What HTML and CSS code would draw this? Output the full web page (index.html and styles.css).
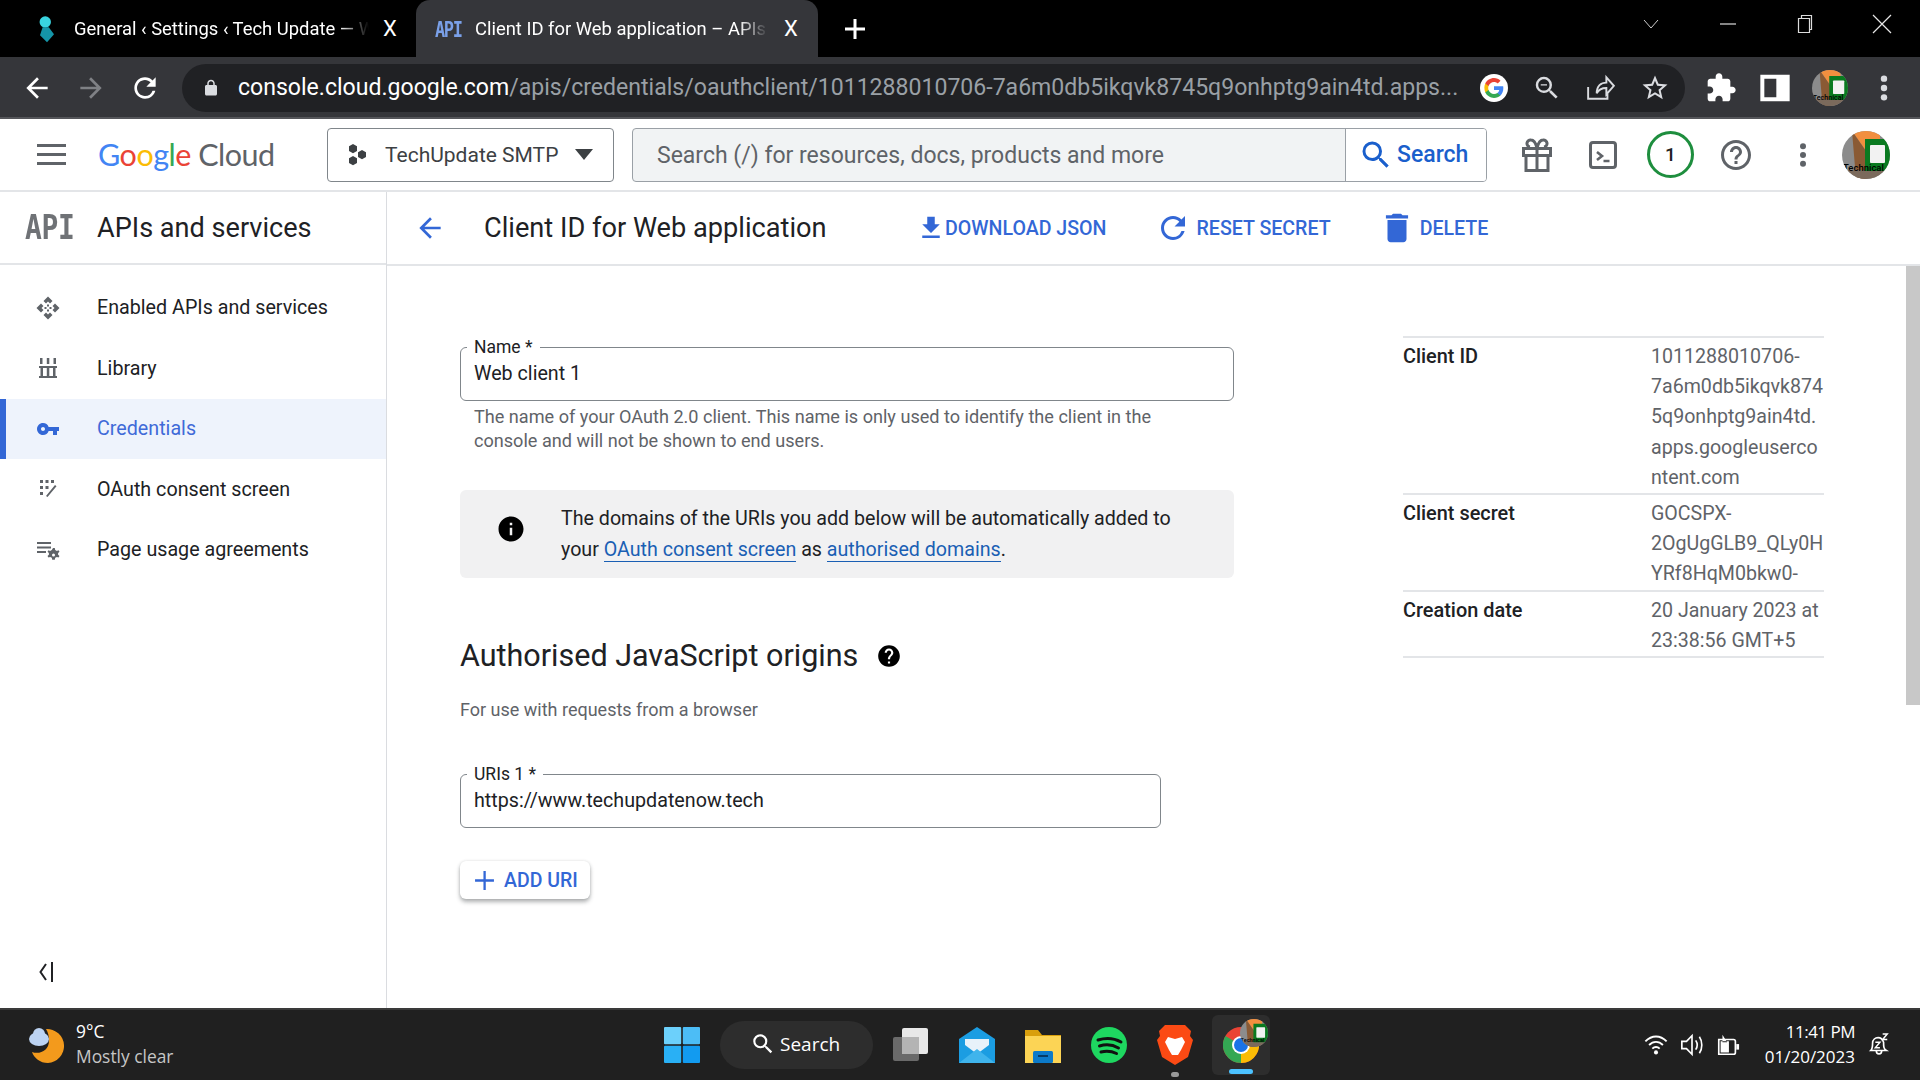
FILE: index.html
```html
<!DOCTYPE html>
<html lang="en">
<head>
<meta charset="utf-8">
<title>Client ID for Web application</title>
<link rel="stylesheet" href="styles.css">
</head>
<body>
<svg class="sprite" aria-hidden="true">
  <symbol id="i-back" viewBox="0 0 24 24"><path d="M20 11H7.83l5.59-5.59L12 4l-8 8 8 8 1.41-1.41L7.83 13H20v-2z"/></symbol>
  <symbol id="i-reload" viewBox="0 0 24 24"><path d="M17.65 6.35A7.958 7.958 0 0 0 12 4c-4.42 0-7.99 3.58-7.99 8s3.57 8 7.99 8c3.73 0 6.84-2.55 7.73-6h-2.08A5.99 5.99 0 0 1 12 18c-3.31 0-6-2.69-6-6s2.69-6 6-6c1.66 0 3.14.69 4.22 1.78L13 11h7V4l-2.35 2.35z"/></symbol>
  <symbol id="i-lock" viewBox="0 0 24 24"><path d="M18 8h-1V6c0-2.76-2.24-5-5-5S7 3.24 7 6v2H6c-1.1 0-2 .9-2 2v10c0 1.1.9 2 2 2h12c1.1 0 2-.9 2-2V10c0-1.1-.9-2-2-2zM9 6c0-1.66 1.34-3 3-3s3 1.34 3 3v2H9V6z"/></symbol>
  <symbol id="i-zoomout" viewBox="0 0 24 24"><path d="M15.5 14h-.79l-.28-.27A6.471 6.471 0 0 0 16 9.5 6.5 6.5 0 1 0 9.5 16c1.61 0 3.09-.59 4.23-1.57l.27.28v.79l5 4.99L20.49 19l-4.99-5zm-6 0C7.01 14 5 11.99 5 9.5S7.01 5 9.5 5 14 7.01 14 9.5 11.99 14 9.5 14zM7 9h5v1H7z"/></symbol>
  <symbol id="i-search" viewBox="0 0 24 24"><path d="M15.5 14h-.79l-.28-.27A6.471 6.471 0 0 0 16 9.5 6.5 6.5 0 1 0 9.5 16c1.61 0 3.09-.59 4.23-1.57l.27.28v.79l5 4.99L20.49 19l-4.99-5zm-6 0C7.01 14 5 11.99 5 9.5S7.01 5 9.5 5 14 7.01 14 9.5 11.99 14 9.5 14z"/></symbol>
  <symbol id="i-star" viewBox="0 0 24 24"><path d="M22 9.24l-7.19-.62L12 2 9.19 8.63 2 9.24l5.46 4.73L5.82 21 12 17.27 18.18 21l-1.63-7.03L22 9.24zM12 15.4l-3.76 2.27 1-4.28-3.32-2.88 4.38-.38L12 6.1l1.71 4.04 4.38.38-3.32 2.88 1 4.28L12 15.4z"/></symbol>
  <symbol id="i-puzzle" viewBox="0 0 24 24"><path d="M20.5 11H19V7c0-1.1-.9-2-2-2h-4V3.5C13 2.12 11.88 1 10.5 1S8 2.12 8 3.5V5H4c-1.1 0-1.99.9-1.99 2v3.8H3.5c1.49 0 2.7 1.21 2.7 2.7s-1.21 2.7-2.7 2.7H2V20c0 1.1.9 2 2 2h3.8v-1.5c0-1.49 1.21-2.7 2.7-2.7 1.49 0 2.7 1.21 2.7 2.7V22H17c1.1 0 2-.9 2-2v-4h1.5c1.38 0 2.5-1.12 2.5-2.5S21.88 11 20.5 11z"/></symbol>
  <symbol id="i-download" viewBox="0 0 24 24"><path d="M19 9h-4V3H9v6H5l7 7 7-7zM5 18v2h14v-2H5z"/></symbol>
  <symbol id="i-trash" viewBox="0 0 24 24"><path d="M6 19c0 1.1.9 2 2 2h8c1.1 0 2-.9 2-2V7H6v12zM19 4h-3.5l-1-1h-5l-1 1H5v2h14V4z"/></symbol>
  <symbol id="i-info" viewBox="0 0 24 24"><path d="M12 2C6.48 2 2 6.48 2 12s4.48 10 10 10 10-4.48 10-10S17.52 2 12 2zm1 15h-2v-6h2v6zm0-8h-2V7h2v2z"/></symbol>
  <symbol id="i-helpf" viewBox="0 0 24 24"><path d="M12 2C6.48 2 2 6.48 2 12s4.48 10 10 10 10-4.48 10-10S17.52 2 12 2zm1 17h-2v-2h2v2zm2.07-7.75l-.9.92C13.45 12.9 13 13.5 13 15h-2v-.5c0-1.1.45-2.1 1.17-2.83l1.24-1.26c.37-.36.59-.86.59-1.41 0-1.1-.9-2-2-2s-2 .9-2 2H8c0-2.21 1.79-4 4-4s4 1.79 4 4c0 .88-.36 1.68-.93 2.25z"/></symbol>
  <symbol id="i-help" viewBox="0 0 24 24"><path d="M11 18h2v-2h-2v2zm1-16C6.48 2 2 6.48 2 12s4.48 10 10 10 10-4.48 10-10S17.52 2 12 2zm0 18c-4.41 0-8-3.59-8-8s3.59-8 8-8 8 3.59 8 8-3.59 8-8 8zm0-14c-2.21 0-4 1.79-4 4h2c0-1.1.9-2 2-2s2 .9 2 2c0 2-3 1.75-3 5h2c0-2.25 3-2.5 3-5 0-2.21-1.79-4-4-4z"/></symbol>
  <symbol id="i-key" viewBox="0 0 24 24"><path d="M12.65 10A5.99 5.99 0 0 0 7 6c-3.31 0-6 2.69-6 6s2.69 6 6 6a5.99 5.99 0 0 0 5.65-4H17v4h4v-4h2v-4H12.65zM7 14c-1.1 0-2-.9-2-2s.9-2 2-2 2 .9 2 2-.9 2-2 2z"/></symbol>
  <symbol id="i-dots" viewBox="0 0 24 24"><circle cx="12" cy="5" r="2.4"/><circle cx="12" cy="12" r="2.4"/><circle cx="12" cy="19" r="2.4"/></symbol>
  <symbol id="i-avatar" viewBox="0 0 48 48"><g clip-path="url(#av)"><rect width="48" height="48" fill="#8c8c8c"/><path d="M10 0h28v20H24z" fill="#f28f3f"/><path d="M10 0l14 20v28H14z" fill="#8a5a34"/><rect x="0" y="39" width="48" height="9" fill="#7b6a5c"/><path d="M23 8h19a6 6 0 0 1 6 6v20a6 6 0 0 1-6 6H23z" fill="#0a7a20"/><rect x="28" y="14" width="15" height="18" rx="1" fill="#f2f2f2"/><text x="1" y="40" class="avatar-text">Technical</text></g></symbol>
  <clipPath id="av"><circle cx="24" cy="24" r="24"/></clipPath>
  <symbol id="i-g" viewBox="0 0 48 48"><circle cx="24" cy="24" r="24" fill="#fff"/><path fill="#4285f4" d="M40 24.6c0-1.2-.1-2.3-.3-3.4H24v6.4h9c-.4 2.1-1.6 3.9-3.3 5.1v4.2h5.4C38.2 33.9 40 29.700 40 24.600z"/><path fill="#34a853" d="M24 41c4.500 0 8.300-1.500 11.100-4.100l-5.400-4.200c-1.500 1-3.400 1.600-5.700 1.600-4.400 0-8.100-3-9.400-6.900H9v4.300C11.800 37 17.500 41 24 41z"/><path fill="#fbbc05" d="M14.600 27.400c-.7-2-.7-4.800 0-6.800v-4.300H9c-2 3.900-2 9.500 0 15.400z"/><path fill="#ea4335" d="M24 13.700c2.500 0 4.700.9 6.400 2.500l4.800-4.800C32.300 8.700 28.500 7 24 7 17.500 7 11.800 11 9 16.300l5.600 4.300c1.300-3.900 5-6.900 9.400-6.900z"/></symbol>
</svg>

<header class="tabstrip">
  <div class="tab">
    <svg class="tab-fav" viewBox="0 0 20 32"><circle cx="8" cy="8" r="6.500" fill="#39d3df"/><path d="M5 14h7l6 8-8 9-8-8z" fill="#1595a8"/></svg>
    <span class="tab-title fade">General ‹ Settings ‹ Tech Update — WordPress</span>
    <span class="tab-x">X</span>
  </div>
  <div class="tab tab-on">
    <span class="tab-api">API</span>
    <span class="tab-title fade">Client ID for Web application – APIs and services</span>
    <span class="tab-x">X</span>
  </div>
  <span class="tab-plus">
    <svg viewBox="0 0 20 20"><path d="M8.500 0h3v8.500H20v3h-8.500V20h-3v-8.500H0v-3h8.500z" fill="#fff"/></svg>
  </span>
  <div class="winctl">
    <svg viewBox="0 0 20 20"><path d="M3 6l7 8 7-8" fill="none" stroke="#cfcfcf" stroke-width="1"/></svg>
    <svg viewBox="0 0 20 20"><path d="M2 10h16" stroke="#dcdcdc" stroke-width="1.200"/></svg>
    <svg viewBox="0 0 20 20"><path d="M3.500 4.500h11v14h-11zM6.500 4.500V1.500h10v14h-2" fill="none" stroke="#dcdcdc" stroke-width="1.200"/></svg>
    <svg viewBox="0 0 20 20"><path d="M1 1l18 18M19 1L1 19" fill="none" stroke="#e6e6e6" stroke-width="1.200"/></svg>
  </div>
</header>

<nav class="toolbar">
  <svg class="tb-ico tb-white"><use href="#i-back"/></svg>
  <svg class="tb-ico tb-dim"><use href="#i-back" transform="matrix(-1 0 0 1 32 0)"/></svg>
  <svg class="tb-ico tb-white"><use href="#i-reload"/></svg>
  <div class="omnibox">
    <svg class="omni-lock"><use href="#i-lock"/></svg>
    <span class="url"><b>console.cloud.google.com</b>/apis/credentials/oauthclient/1011288010706-7a6m0db5ikqvk8745q9onhptg9ain4td.apps...</span>
    <svg class="omni-g"><use href="#i-g"/></svg>
    <svg class="omni-ico"><use href="#i-zoomout"/></svg>
    <svg class="omni-ico" viewBox="0 0 28 28"><path d="M4 13v11h18v-6M12 19c0-7 4-10 9-10V4l7 8-7 8v-6c-4 0-7 1-9 5z" transform="translate(-2 0)" fill="none" stroke="#dadce0" stroke-width="1.800"/></svg>
    <svg class="omni-ico"><use href="#i-star"/></svg>
  </div>
  <svg class="tb-ico tb-white ext"><use href="#i-puzzle"/></svg>
  <svg class="tb-ico" viewBox="0 0 24 24"><path fill-rule="evenodd" d="M1 2h22v20H1zM4 5v14h9V5z" fill="#fff"/></svg>
  <svg class="tb-avatar"><use href="#i-avatar"/></svg>
  <svg class="tb-ico tb-grey"><use href="#i-dots"/></svg>
</nav>

<div class="gc-header">
  <div class="burger"><i></i><i></i><i></i></div>
  <div class="logo"><span class="c-b">G</span><span class="c-r">o</span><span class="c-y">o</span><span class="c-b">g</span><span class="c-g">l</span><span class="c-r">e</span> <span class="logo-cloud">Cloud</span></div>
  <button class="project">
    <svg class="hex" viewBox="0 0 20 22"><path d="M5 0l4 2.300v4.600L5 9.200 1 6.900V2.300zM14 6l4 2.300v4.600L14 15.200l-4-2.300V8.300zM5 12l4 2.300v4.600L5 21.200 1 18.900v-4.600z" fill="#3c4043"/></svg>
    <span>TechUpdate SMTP</span>
    <i class="caret"></i>
  </button>
  <div class="searchbox">
    <span class="search-ph">Search (/) for resources, docs, products and more</span>
    <span class="search-btn"><svg><use href="#i-search"/></svg>Search</span>
  </div>
  <div class="gc-tools">
    <svg class="gc-ico" viewBox="0 0 32 34"><path d="M2.500 10.500h27v7h-27zM5 17.500h22v15H5zM16 10.500v22M16 10c-1-4-3-8-6-8a3.500 3.500 0 0 0-1 7M16 10c1-4 3-8 6-8a3.500 3.500 0 0 1 1 7" fill="none" stroke="#5f6368" stroke-width="3"/></svg>
    <svg class="gc-ico" viewBox="0 0 32 34"><rect x="3.500" y="4.500" width="25" height="25" rx="2.500" fill="none" stroke="#5f6368" stroke-width="3"/><path d="M10 14l5 4-5 4M16.500 23h6" fill="none" stroke="#5f6368" stroke-width="2.600"/></svg>
    <span class="badge">1</span>
    <svg class="gc-ico help"><use href="#i-help"/></svg>
    <svg class="gc-ico dots"><use href="#i-dots"/></svg>
    <svg class="gc-avatar"><use href="#i-avatar"/></svg>
  </div>
</div>

<div class="workspace">
  <aside class="sidebar">
    <div class="side-head"><span class="api-mark">API</span><span class="side-title">APIs and services</span></div>
    <ul class="side-nav">
      <li class="nav-item">
        <svg class="nav-ico" viewBox="0 0 24 24"><path d="M12 .5l4.500 4.500-2.500 2.500-2-2-2 2L7.500 5zM12 23.500L7.500 19l2.500-2.500 2 2 2-2 2.500 2.500zM.5 12L5 7.500 7.500 10l-2 2 2 2L5 16.500zM23.500 12L19 16.500 16.500 14l2-2-2-2L19 7.500z"/><rect x="11" y="8.500" width="2" height="2"/><rect x="11" y="13.500" width="2" height="2"/><rect x="8.500" y="11" width="2" height="2"/><rect x="13.500" y="11" width="2" height="2"/></svg>
        Enabled APIs and services
      </li>
      <li class="nav-item">
        <svg class="nav-ico" viewBox="0 0 24 24"><path d="M4 2h2.500v6H4zM10.800 2h2.500v6h-2.500zM17.500 2H20v6h-2.500zM3 10h18v2H3zM4.500 12H7v8H4.500zM10.800 12h2.500v8h-2.500zM17 12h2.500v8H17zM3 20h18v2H3z"/></svg>
        Library
      </li>
      <li class="nav-item nav-on">
        <svg class="nav-ico"><use href="#i-key"/></svg>
        Credentials
      </li>
      <li class="nav-item">
        <svg class="nav-ico" viewBox="0 0 24 24"><path d="M4 3h3v3H4zM9.500 3h3v3h-3zM15 3h3v3h-3zM4 9h3v3H4zM9.500 9h3v3h-3zM4 15h3v3H4zM10 19l9-11 1.500 1.300L11.500 20z"/></svg>
        OAuth consent screen
      </li>
      <li class="nav-item">
        <svg class="nav-ico" viewBox="0 0 24 24"><path d="M1 4h14v2H1zM1 8.500h14v2H1zM1 13h9v2H1zM17 10l1.800 0 .4 2 1.700.9 1.600-.7 1 1.600-1.400 1.200v1.800l1.400 1.200-1 1.600-1.600-.7-1.700.9-.4 2H16.200l-.4-2-1.700-.9-1.600.7-1-1.600 1.400-1.200v-1.800l-1.400-1.200 1-1.600 1.600.7 1.700-.9zM17.500 15.500a1.500 1.500 0 1 0 0 3 1.500 1.500 0 0 0 0-3z" fill-rule="evenodd"/></svg>
        Page usage agreements
      </li>
    </ul>
    <div class="collapse"><svg viewBox="0 0 16 22"><path d="M7 3L1.500 11 7 19M13 1v20" fill="none" stroke="#202124" stroke-width="2"/></svg></div>
  </aside>

  <main class="content">
    <div class="page-head">
      <svg class="back"><use href="#i-back"/></svg>
      <h1 class="page-title">Client ID for Web application</h1>
      <a class="act act-dl"><svg><use href="#i-download"/></svg>DOWNLOAD JSON</a>
      <a class="act act-reset"><svg><use href="#i-reload"/></svg>RESET SECRET</a>
      <a class="act act-del"><svg><use href="#i-trash"/></svg>DELETE</a>
    </div>
    <div class="scroll-area">
      <div class="form-col">
        <div class="field field-name">
          <span class="field-label">Name *</span>
          <span class="field-value">Web client 1</span>
        </div>
        <p class="helper">The name of your OAuth 2.0 client. This name is only used to identify the client in the console and will not be shown to end users.</p>
        <div class="notice">
          <svg class="notice-ico"><use href="#i-info"/></svg>
          <p>The domains of the URIs you add below will be automatically added to your <a>OAuth consent screen</a> as <a>authorised domains</a>.</p>
        </div>
        <h2 class="section-title">Authorised JavaScript origins <svg><use href="#i-helpf"/></svg></h2>
        <p class="section-sub">For use with requests from a browser</p>
        <div class="field field-uri">
          <span class="field-label">URIs 1 *</span>
          <span class="field-value">https://www.techupdatenow.tech</span>
        </div>
        <button class="add-uri"><svg viewBox="0 0 20 20"><path d="M9 1h2.200v7.900H19v2.200h-7.800V19H9v-7.900H1V8.900h8z"/></svg>ADD URI</button>
      </div>
      <dl class="meta">
        <div class="meta-row"><dt>Client ID</dt><dd>1011288010706-<br>7a6m0db5ikqvk874<br>5q9onhptg9ain4td.<br>apps.googleuserco<br>ntent.com</dd></div>
        <div class="meta-row"><dt>Client secret</dt><dd>GOCSPX-<br>2OgUgGLB9_QLy0H<br>YRf8HqM0bkw0-</dd></div>
        <div class="meta-row"><dt>Creation date</dt><dd>20 January 2023 at<br>23:38:56 GMT+5</dd></div>
      </dl>
      <div class="scrollbar"><i></i></div>
    </div>
  </main>
</div>

<footer class="taskbar">
  <div class="weather">
    <svg viewBox="0 0 36 40"><path d="M18 4a17 17 0 0 1 2 34C12 38 6 33 4 27c8 3 17-2 17-11 0-5-1-9-3-12z" fill="#f39a1c"/><ellipse cx="11" cy="14" rx="10" ry="7" fill="#bcd3f2"/><circle cx="11" cy="9" r="6" fill="#bcd3f2"/></svg>
    <div class="weather-text"><span>9°C</span><span class="dim">Mostly clear</span></div>
  </div>
  <div class="task-center">
    <svg class="winlogo" viewBox="0 0 36 36"><rect width="17.200" height="17.200" rx="1" fill="#6cd0fb"/><rect x="18.800" width="17.200" height="17.200" rx="1" fill="#4cbdf6"/><rect y="18.800" width="17.200" height="17.200" rx="1" fill="#29b0f5"/><rect x="18.800" y="18.800" width="17.200" height="17.200" rx="1" fill="#129bf0"/></svg>
    <div class="task-search"><svg><use href="#i-search"/></svg>Search</div>
    <svg class="task-ico view" viewBox="0 0 36 36"><rect x="0" y="10" width="26" height="24" rx="2" fill="#6a6a6a"/><rect x="9" y="1" width="26" height="26" rx="2" fill="#e8e8e8"/><rect x="9" y="10" width="17" height="17" fill="#b4b4b4"/></svg>
    <svg class="task-ico" viewBox="0 0 36 36"><path d="M0 12L18 0l18 12v24H0z" fill="#1b9de2"/><path d="M6 12h24v6L18 27 6 18z" fill="#e8f2fa"/><path d="M0 36l18-14 18 14z" fill="#3fb4ec"/></svg>
    <svg class="task-ico" viewBox="0 0 36 36"><path d="M0 3h13l4 5h19v28H0z" fill="#d99f0d"/><path d="M0 9h36v27H0z" fill="#fcd455"/><rect x="8" y="24" width="20" height="12" rx="1.500" fill="#0c7ac9"/><rect x="13" y="28" width="10" height="2" fill="#063b66"/></svg>
    <svg class="task-ico" viewBox="0 0 36 36"><circle cx="18" cy="18" r="18" fill="#1ed760"/><path d="M7 13c8-2.500 16-2 23 2M8.500 19c6.500-2 13-1.500 19 2M10 25c5.500-1.500 10.500-1 15.500 1.500" fill="none" stroke="#111" stroke-width="3" stroke-linecap="round"/></svg>
    <div class="task-pin">
      <svg class="task-ico" viewBox="0 0 36 40"><path d="M8 0h20l6 6-1 5 3 4-5 17-13 8-13-8-5-17 3-4-1-5z" fill="#fb4a14"/><path d="M11 12l7 2 7-2 3 5-4 8-3 5h-6l-3-5-4-8z" fill="#fff"/></svg>
      <i class="pin-dot"></i>
    </div>
    <div class="task-active">
      <svg class="task-ico" viewBox="0 0 36 36"><circle cx="18" cy="18" r="18" fill="#ea4335"/><path d="M18 36A18 18 0 0 1 2.400 9L18 18z" fill="#34a853"/><path d="M18 36A18 18 0 0 0 33.600 9L18 18z" fill="#fbbc05"/><circle cx="18" cy="18" r="9" fill="#fff"/><circle cx="18" cy="18" r="7" fill="#1a73e8"/></svg>
      <svg class="task-badge"><use href="#i-avatar"/></svg>
      <i class="active-bar"></i>
    </div>
  </div>
  <div class="tray">
    <svg class="tray-ico" viewBox="0 0 26 24"><path d="M1.500 8c7-7 16-7 23 0M5.500 12c4.500-4.500 10.500-4.500 15 0M9 16c2.500-2.500 5.500-2.500 8 0" fill="none" stroke="#fff" stroke-width="2"/><circle cx="13" cy="20" r="2.200" fill="#fff"/></svg>
    <svg class="tray-ico" viewBox="0 0 26 24"><path d="M2 8h5l6-6v20l-6-6H2zM17 7c2 3 2 7 0 10M21 3c3.500 5 3.500 13 0 18" fill="none" stroke="#fff" stroke-width="1.800"/></svg>
    <svg class="tray-ico" viewBox="0 0 26 24"><path d="M3 6h16a2 2 0 0 1 2 2v12a2 2 0 0 1-2 2H3z" fill="none" stroke="#fff" stroke-width="1.800"/><path d="M22 11h3v6h-3z" fill="#fff"/><path d="M5 8h9v12H5zM7 1v8h5z" fill="#fff"/></svg>
    <div class="clock"><span class="clock-time">11:41 PM</span><span>01/20/2023</span></div>
    <svg class="tray-ico bell" viewBox="0 0 24 28"><path d="M3 20c2-2 2-4 2-8 0-4 3-6 6-6s5 2 6 5c0 5 0 7 3 9zM9 20c0 5 6 5 6 0" fill="none" stroke="#fff" stroke-width="1.800"/><path d="M8 11h5l-5 6h5M16 2h5l-5 6h5" fill="none" stroke="#fff" stroke-width="1.600"/></svg>
  </div>
</footer>
</body>
</html>
```

FILE: styles.css
```css
* { box-sizing: border-box; }
html, body { margin: 0; padding: 0; }
body {
  width: 1920px; height: 1080px; overflow: hidden;
  display: flex; flex-direction: column;
  font-family: Roboto, "Liberation Sans", sans-serif;
  background: #fff; color: #202124;
}
p, h1, h2, dl, dd, ul { margin: 0; padding: 0; }
ul { list-style: none; }
button { font: inherit; }
.sprite { position: absolute; width: 0; height: 0; overflow: hidden; }
.avatar-text { font: 500 9.500px Roboto, sans-serif; fill: #000; }

/* tab strip */
.tabstrip { height: 57px; flex: none; background: #000; display: flex; align-items: stretch; padding-left: 37px; color: #fff; }
.tab { width: 379px; display: flex; align-items: center; font-size: 18.400px; }
.tab-fav { width: 20px; height: 28px; margin-right: 17px; flex: none; }
.tab-title { white-space: nowrap; overflow: hidden; flex: 1; min-width: 0; }
.fade { -webkit-mask-image: linear-gradient(90deg, #000 90%, transparent 100%); mask-image: linear-gradient(90deg, #000 90%, transparent 100%); }
.tab-x { width: 18px; margin: 0 17px 0 0; font-size: 22px; font-weight: 400; text-align: center; flex: none; }
.tab:first-child .tab-title { flex: none; width: 295px; }
.tab:first-child .tab-x { margin-left: 12px; margin-right: 15px; }
.tab-on { width: 402px; background: #35363a; border-radius: 14px 14px 0 0; padding-left: 19px; }
.tab-on .tab-x { margin-left: 14px; margin-right: 18px; }
.tab-api { display: inline-block; width: 27px; margin-right: 13px; font: 700 17px "DejaVu Sans Mono", monospace; letter-spacing: -1.400px; color: #7aa0e8; flex: none; transform: scaleY(1.25); }
.tab-plus { display: flex; align-items: center; margin-left: 27px; }
.tab-plus svg { width: 20px; height: 20px; }
.winctl { margin-left: auto; display: flex; align-items: center; gap: 57px; padding: 0 28px 10px 0; }
.winctl svg { width: 20px; height: 20px; }

/* toolbar */
.toolbar { height: 62px; flex: none; background: #35363a; border-bottom: 2px solid #55565a; display: flex; align-items: center; padding: 1px 20px 0 21px; }
.tb-ico { width: 32px; height: 32px; flex: none; margin-right: 22px; }
.tb-white { fill: #fff; }
.tb-dim { fill: #7f8185; }
.tb-grey { fill: #dadce0; margin-right: 0; }
.omnibox { flex: none; width: 1503px; height: 48px; margin: 0 20px 0 -1px; background: #202124; border-radius: 24px; display: flex; align-items: center; padding-left: 20px; }
.omni-lock { width: 18px; height: 18px; fill: #dadce0; flex: none; margin-right: 18px; }
.url { width: 1223px; flex: none; font-size: 23.070px; white-space: nowrap; overflow: hidden; color: #9aa0a6; }
.url b { color: #fff; font-weight: 400; }
.omni-g { width: 28px; height: 28px; flex: none; margin: 0 24px 0 19px; }
.omni-ico { width: 30px; height: 30px; flex: none; fill: #dadce0; margin-right: 24px; }
.tb-avatar { width: 36px; height: 36px; flex: none; margin: 0 20px 0 -1px; }

/* cloud header */
.gc-header { height: 73px; flex: none; border-bottom: 2px solid #e3e5e8; display: flex; align-items: center; padding-left: 37px; background: #fff; }
.burger { width: 29px; display: flex; flex-direction: column; gap: 6px; flex: none; }
.burger i { height: 3px; background: #5f6368; }
.logo { width: 229px; margin: -2px 0 0 32px; font: 400 30.500px Lato, Roboto, sans-serif; letter-spacing: -.5px; white-space: nowrap; flex: none; }
.c-b { color: #4285f4; } .c-r { color: #ea4335; } .c-y { color: #fbbc05; } .c-g { color: #34a853; }
.logo-cloud { color: #5f6368; }
.project { width: 287px; height: 54px; flex: none; background: #fff; border: 1px solid #80868b; border-radius: 4px; display: flex; align-items: center; padding: 0 20px; font-size: 21px; color: #3c4043; }
.hex { width: 20px; height: 22px; margin-right: 17px; }
.caret { margin-left: auto; border: 9px solid transparent; border-top: 11px solid #3c4043; border-bottom: 0; }
.searchbox { width: 855px; height: 54px; flex: none; margin-left: 18px; border: 1px solid #9aa0a6; border-radius: 4px; background: #f1f3f4; display: flex; align-items: stretch; overflow: hidden; }
.search-ph { flex: 1; display: flex; align-items: center; padding: 2px 0 0 24px; font-size: 23px; color: #5f6368; }
.search-btn { width: 141px; background: #fff; border-left: 1px solid #9aa0a6; display: flex; align-items: center; padding-left: 12px; gap: 3px; color: #1a5fcc; font-size: 23px; font-weight: 500; }
.search-btn svg { width: 36px; height: 36px; fill: #1a5fcc; flex: none; }
.gc-tools { display: flex; align-items: center; margin-left: 34px; }
.gc-ico { width: 32px; height: 34px; flex: none; }
.gc-ico + .gc-ico { margin-left: 34px; }
.badge { width: 47px; height: 47px; margin-left: 28px; border: 3px solid #1e8e3e; border-radius: 50%; display: flex; align-items: center; justify-content: center; font-size: 19px; font-weight: 500; color: #202124; flex: none; }
.gc-ico.help { width: 36px; height: 36px; margin-left: 24px; fill: #5f6368; }
.gc-ico.dots { width: 30px; height: 30px; fill: #5f6368; margin-left: 34px; }
.gc-avatar { width: 48px; height: 48px; margin-left: 24px; flex: none; }

/* workspace */
.workspace { flex: 1; min-height: 0; display: flex; }
.sidebar { width: 387px; flex: none; border-right: 1px solid #dadce0; display: flex; flex-direction: column; }
.side-head { height: 73px; flex: none; border-bottom: 2px solid #e3e5e8; display: flex; align-items: center; padding-left: 25px; }
.api-mark { display: inline-block; width: 72px; font: 700 28px "DejaVu Sans Mono", monospace; letter-spacing: -.4px; color: #6f7276; transform: scaleY(1.2); transform-origin: 0 50%; }
.side-title { font-size: 27.100px; color: #202124; }
.side-nav { padding-top: 12.500px; }
.nav-item { height: 60.500px; display: flex; align-items: center; font-size: 19.700px; padding-left: 36px; color: #202124; }
.nav-ico { width: 24px; height: 24px; flex: none; margin-right: 37px; fill: #5f6368; }
.nav-on { background: #eef3fc; border-left: 6px solid #3367d6; padding-left: 30px; color: #3f6ad8; }
.nav-on .nav-ico { fill: #3367d6; }
.collapse { margin-top: auto; padding: 0 0 25px 39px; }
.collapse svg { width: 16px; height: 22px; display: block; }

/* main */
.content { flex: 1; min-width: 0; display: flex; flex-direction: column; }
.page-head { height: 74px; flex: none; border-bottom: 2px solid #e3e5e8; display: flex; align-items: center; padding-left: 27px; }
.back { width: 32px; height: 32px; fill: #3367d6; flex: none; }
.page-title { width: 432px; margin-left: 38px; font-size: 27.200px; font-weight: 400; flex: none; color: #202124; white-space: nowrap; }
.act { display: flex; align-items: center; font-size: 19.600px; font-weight: 500; color: #3367d6; white-space: nowrap; flex: none; }
.act svg { fill: #3367d6; flex: none; }
.act-dl svg { width: 30px; height: 30px; margin-right: -1px; }
.act-reset { margin-left: 48px; }
.act-reset svg { width: 36px; height: 36px; margin-right: 6px; }
.act-del { margin-left: 47px; }
.act-del svg { width: 38px; height: 38px; margin-right: 4px; }
.scroll-area { flex: 1; min-height: 0; display: flex; position: relative; }
.form-col { width: 847px; flex: none; padding: 81px 0 0 73px; }
.field { position: relative; height: 54px; border: 1px solid #80868b; border-radius: 6px; display: flex; align-items: center; padding: 0 0 2px 13px; font-size: 19.700px; color: #202124; }
.field-name { width: 774px; }
.field-label { position: absolute; left: 6px; top: -11px; padding: 0 7px; background: #fff; font-size: 17.500px; line-height: 20px; color: #202124; }
.helper { width: 720px; margin: 4px 0 0 14px; font-size: 18.100px; line-height: 24px; color: #5f6368; }
.notice { width: 774px; height: 88px; margin-top: 37px; background: #f1f1f2; border-radius: 6px; display: flex; align-items: center; padding: 0 30px 0 36px; }
.notice-ico { width: 30px; height: 30px; fill: #000; flex: none; margin: 0 35px 10px 0; }
.notice p { font-size: 19.650px; line-height: 31px; color: #202124; }
.notice a { color: #1a5fb4; border-bottom: 1px solid #1a5fb4; }
.section-title { display: flex; align-items: center; gap: 18px; margin-top: 58px; font-size: 30.500px; font-weight: 400; line-height: 40px; color: #202124; }
.section-title svg { width: 26px; height: 26px; fill: #000; flex: none; }
.section-sub { margin-top: 22px; font-size: 18px; line-height: 24px; color: #5f6368; }
.field-uri { width: 701px; margin-top: 52px; }
.add-uri { height: 38px; width: 130px; margin-top: 33px; background: #fff; border: 0; border-radius: 6px; box-shadow: 0 3px 4px rgba(60,64,67,.4), 0 0 3px rgba(60,64,67,.15); display: flex; align-items: center; padding: 0 0 0 14px; font-size: 19.500px; font-weight: 500; color: #3367d6; }
.add-uri svg { width: 21px; height: 21px; fill: #3367d6; margin-right: 9px; flex: none; }
.meta { width: 421px; flex: none; margin: 70px 0 0 169px; align-self: flex-start; border-top: 2px solid #e3e5e8; }
.meta-row { display: flex; border-bottom: 2px solid #e3e5e8; padding: 4px 0 0; }
.meta dt { width: 248px; flex: none; font-size: 19.900px; font-weight: 500; line-height: 30.200px; color: #202124; }
.meta dd { font-size: 19.600px; line-height: 30.200px; color: #5f6368; white-space: nowrap; }
.scrollbar { position: absolute; right: 0; top: 0; bottom: 0; width: 14px; background: #fff; }
.scrollbar i { display: block; height: 439px; background: #c8c8c8; }

/* taskbar */
.taskbar { height: 72px; flex: none; background: #202020; border-top: 2px solid #3a3a3a; display: flex; align-items: center; color: #fff; font-family: "Open Sans", "Noto Sans", sans-serif; }
.weather { width: 664px; flex: none; display: flex; align-items: center; padding-left: 28px; }
.weather svg { width: 36px; height: 40px; margin-right: 12px; flex: none; }
.weather-text { display: flex; flex-direction: column; font-size: 17.400px; line-height: 24.500px; margin-top: -3px; }
.dim { color: #c6c6c6; }
.task-center { display: flex; align-items: center; }
.winlogo { width: 36px; height: 36px; flex: none; }
.task-search { width: 153px; height: 48px; margin-left: 20px; border-radius: 24px; background: #2d2d2d; display: flex; align-items: center; padding: 0 0 2px 30px; gap: 4px; font-size: 19px; }
.task-search svg { width: 26px; height: 26px; fill: #fff; flex: none; }
.task-ico { width: 36px; height: 36px; flex: none; margin-left: 30px; display: block; }
.view { margin-left: 20px; }
.task-pin { position: relative; height: 40px; margin-left: 30px; }
.task-pin .task-ico { margin-left: 0; height: 40px; }
.pin-dot { position: absolute; left: 14px; top: 47px; width: 8px; height: 5px; border-radius: 3px; background: #9a9a9a; }
.task-active { position: relative; width: 58px; height: 60px; margin-left: 19px; border-radius: 6px; background: #2d2d2d; display: flex; align-items: center; justify-content: center; }
.task-active .task-ico { margin-left: 0; }
.task-badge { position: absolute; right: 2px; top: 4px; width: 28px; height: 28px; }
.active-bar { position: absolute; left: 17px; bottom: 1px; width: 24px; height: 5px; border-radius: 3px; background: #4cc2ff; }
.tray { margin-left: auto; display: flex; align-items: center; padding-right: 30px; }
.tray-ico { width: 24px; height: 24px; margin-left: 12px; flex: none; }
.clock { display: flex; flex-direction: column; align-items: flex-end; margin-left: 25px; margin-top: -3px; font-size: 17px; line-height: 25px; }
.clock-time { letter-spacing: -.5px; }
.bell { width: 22px; height: 28px; margin-left: 13px; }
```
